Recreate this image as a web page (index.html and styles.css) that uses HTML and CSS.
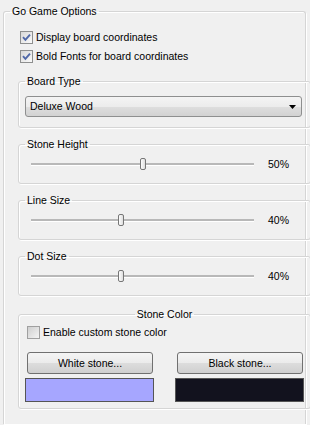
FILE: index.html
```html
<!DOCTYPE html>
<html lang="en">
<head>
    <meta charset="UTF-8">
    <meta name="viewport" content="width=device-width, initial-scale=1.0">
    <title>Go Game Options</title>
    <link rel="stylesheet" href="styles.css">
</head>
<body>
    <fieldset class="group outer">
        <legend>Go Game Options</legend>
        <label class="check">
            <span class="box"><svg width="11" height="11" viewBox="0 0 11 11"><path d="M2 5.2 L4.4 7.8 L9 2.6" fill="none" stroke="#5068a8" stroke-width="1.9"/></svg></span>
            Display board coordinates
        </label>
        <label class="check second">
            <span class="box"><svg width="11" height="11" viewBox="0 0 11 11"><path d="M2 5.2 L4.4 7.8 L9 2.6" fill="none" stroke="#5068a8" stroke-width="1.9"/></svg></span>
            Bold Fonts for board coordinates
        </label>

        <fieldset class="group inner">
            <legend>Board Type</legend>
            <div class="combo">
                <span>Deluxe Wood</span>
                <svg class="arrow" width="7" height="4" viewBox="0 0 7 4"><path d="M0 0 H7 L3.5 4 Z" fill="#000"/></svg>
            </div>
        </fieldset>

        <fieldset class="group inner slide">
            <legend>Stone Height</legend>
            <div class="slider-row">
                <input type="range" min="0" max="100" value="50">
                <span class="pct">50%</span>
            </div>
        </fieldset>

        <fieldset class="group inner slide">
            <legend>Line Size</legend>
            <div class="slider-row">
                <input type="range" min="0" max="100" value="40">
                <span class="pct">40%</span>
            </div>
        </fieldset>

        <fieldset class="group inner slide">
            <legend>Dot Size</legend>
            <div class="slider-row">
                <input type="range" min="0" max="100" value="40">
                <span class="pct">40%</span>
            </div>
        </fieldset>

        <fieldset class="group inner stone">
            <legend>Stone Color</legend>
            <label class="check">
                <span class="box off"></span>
                Enable custom stone color
            </label>
            <div class="stone-grid">
                <button class="btn">White stone...</button>
                <button class="btn">Black stone...</button>
                <div class="swatch white"></div>
                <div class="swatch black"></div>
            </div>
        </fieldset>
    </fieldset>
</body>
</html>
```

FILE: styles.css
```css
*{
    box-sizing: border-box;
}
body{
    margin: 0;
    width: 310px;
    height: 425px;
    overflow: hidden;
    background: #f0f0f0;
    font-family: "Liberation Sans", Arial, sans-serif;
    font-size: 10.5px;
    line-height: 13px;
    color: #000;
}

/* group boxes */
.group{
    border: 1px solid #d5d5d5;
    border-radius: 3px;
    box-shadow: 1px 1px 0 #fff, inset 1px 1px 0 #fff;
    min-width: 0;
}
.group legend{
    padding: 0 2px;
    line-height: 13px;
}
/* window is cut off at the bottom, so no bottom edge */
.outer{
    margin: 5px 4px 0 3px;
    padding: 13px 0 15px 0;
    border-bottom: 0;
    border-radius: 3px 3px 0 0;
}
.outer > legend{
    margin-left: 6px;
}
.inner{
    margin: 12px -6px 0 14px;
    padding: 8px 6px 10px 6px;
}
.slide{
    margin-top: 10px;
    padding: 7px 6px 13px 6px;
}

/* checkboxes */
.check{
    display: flex;
    align-items: center;
    height: 13px;
    margin-left: 16px;
    gap: 3px;
}
.check.second{
    margin-top: 6px;
}
.box{
    width: 13px;
    height: 13px;
    border: 1px solid #8e8f8f;
    background: linear-gradient(135deg, #d8d8d8, #fafafa);
    display: flex;
    align-items: center;
    justify-content: center;
}
.box.off{
    background: linear-gradient(135deg, #cfcfcf, #f4f4f4);
    border-color: #a0a0a0;
}

/* combo box */
.combo{
    height: 21px;
    width: 277px;
    border: 1px solid #8e8f8f;
    border-radius: 3px;
    background: linear-gradient(#f4f4f4 0%, #ececec 50%, #dedede 50%, #d2d2d2 100%);
    display: flex;
    align-items: center;
    justify-content: space-between;
    padding: 0 5px 0 4px;
}

/* sliders */
.slider-row{
    display: flex;
    align-items: center;
    height: 12px;
}
.slider-row input[type="range"]{
    -webkit-appearance: none;
    appearance: none;
    width: 223px;
    height: 12px;
    margin: 0 0 0 6px;
    background: transparent;
}
.slider-row input[type="range"]::-webkit-slider-runnable-track{
    height: 3px;
    background: #b8b8b8;
    border-bottom: 1px solid #fff;
}
.slider-row input[type="range"]::-webkit-slider-thumb{
    -webkit-appearance: none;
    width: 6px;
    height: 12px;
    margin-top: -5px;
    border: 1px solid #767676;
    border-radius: 2px;
    background: linear-gradient(90deg, #fdfdfd, #dedede);
}
.pct{
    margin-left: 14px;
}

/* stone color */
.stone{
    margin-top: 12px;
    padding: 5px 6px 6px 6px;
}
.stone legend{
    margin: 0 auto;
}
.stone .check{
    margin-left: 2px;
}
.stone-grid{
    display: grid;
    grid-template-columns: 129px 129px;
    column-gap: 21px;
    row-gap: 4px;
    margin-top: 13px;
}
.btn{
    height: 22px;
    margin: 0 1px 0 2px;
    border: 1px solid #707070;
    border-radius: 3px;
    background: linear-gradient(#f4f4f4 0%, #ebebeb 50%, #dddddd 50%, #cfcfcf 100%);
    font: inherit;
    color: #000;
    padding: 0;
}
.swatch{
    height: 24px;
    border: 1px solid #555;
}
.swatch.white{
    background: #a6a6ff;
}
.swatch.black{
    background: #12121e;
}
```
